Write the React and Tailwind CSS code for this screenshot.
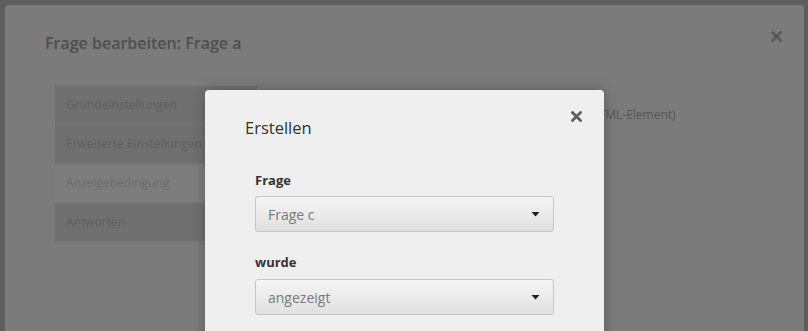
const sideItems = [
  { label: 'Grundeinstellungen', active: false },
  { label: 'Erweiterte Einstellungen', active: false },
  { label: 'Anzeigebedingung', active: true },
  { label: 'Antworten', active: false },
]

function CloseIcon({ color, size = 11 }) {
  return (
    <svg width={size} height={size} viewBox="0 0 11 11" className="shrink-0">
      <path d="M1.5 1.5 L9.5 9.5 M9.5 1.5 L1.5 9.5" stroke={color} strokeWidth="2.8" strokeLinecap="square" />
    </svg>
  )
}

function Caret() {
  return (
    <svg width="9" height="5" viewBox="0 0 9 5" className="shrink-0">
      <path d="M0.5 0 H8.5 L4.5 4.5 Z" fill="#1f1f1f" />
    </svg>
  )
}

function SelectBox({ value }) {
  return (
    <div className="flex h-[36px] w-[299px] items-center justify-between rounded-[3px] border border-[#c6c6c6] bg-gradient-to-b from-[#f5f5f5] to-[#e0e0e0] pl-[12px] pr-[13px]">
      <span className="text-[14px] text-[#7a7a7a]">{value}</span>
      <Caret />
    </div>
  )
}

export default function App() {
  return (
    <div
      className="relative h-[331px] w-[808px] overflow-hidden bg-[#5e5e5e]"
      style={{ fontFamily: '"Open Sans", "Noto Sans", sans-serif' }}
    >
      {/* background dialog, dimmed */}
      <div className="ml-[5px] mt-[5px] h-[340px] w-[799px] rounded-t-[4px] bg-[#7b7b7b]">
        <div className="flex items-start justify-between pl-[40px] pr-[22px] pt-[26px]">
          <h1 className="text-[16px] font-semibold leading-[24px] text-[#4e4e4e]">
            Frage bearbeiten: Frage a
          </h1>
          <CloseIcon color="#5a5a5a" />
        </div>
        <div className="mt-[31px] flex pl-[50px]">
          <ul className="w-[202px]">
            {sideItems.map((item) => (
              <li
                key={item.label}
                className={
                  'flex h-[39px] items-center border-b border-[#777777] px-[11px] text-[12px] ' +
                  (item.active ? 'bg-[#7d7d7d] text-[#6c6c6c]' : 'bg-[#707070] text-[#5f5f5f]')
                }
              >
                {item.label}
              </li>
            ))}
          </ul>
          <div className="pl-[276px] pt-[20px] text-[12px] text-[#555555]">
            Typ: Text (HTML-Element)
          </div>
        </div>
      </div>

      {/* front dialog */}
      <div className="absolute left-[205px] top-[90px] h-[260px] w-[399px] rounded-t-[4px] bg-[#efefef] shadow-[0_0_14px_rgba(0,0,0,0.25)]">
        <div className="flex items-start justify-between pl-[40px] pr-[22px] pt-[27px]">
          <h2 className="text-[16.5px] font-medium leading-[22px] text-[#333333]">Erstellen</h2>
          <div className="mt-[-6px]">
            <CloseIcon color="#606060" />
          </div>
        </div>
        <div className="mt-[32px] pl-[50px]">
          <label className="block text-[13px] font-bold leading-[18px] text-[#333333]">
            Frage
          </label>
          <div className="mt-[7px]">
            <SelectBox value="Frage c" />
          </div>
          <label className="mt-[21px] block text-[13px] font-bold leading-[18px] text-[#333333]">
            wurde
          </label>
          <div className="mt-[8px]">
            <SelectBox value="angezeigt" />
          </div>
        </div>
      </div>
    </div>
  )
}
